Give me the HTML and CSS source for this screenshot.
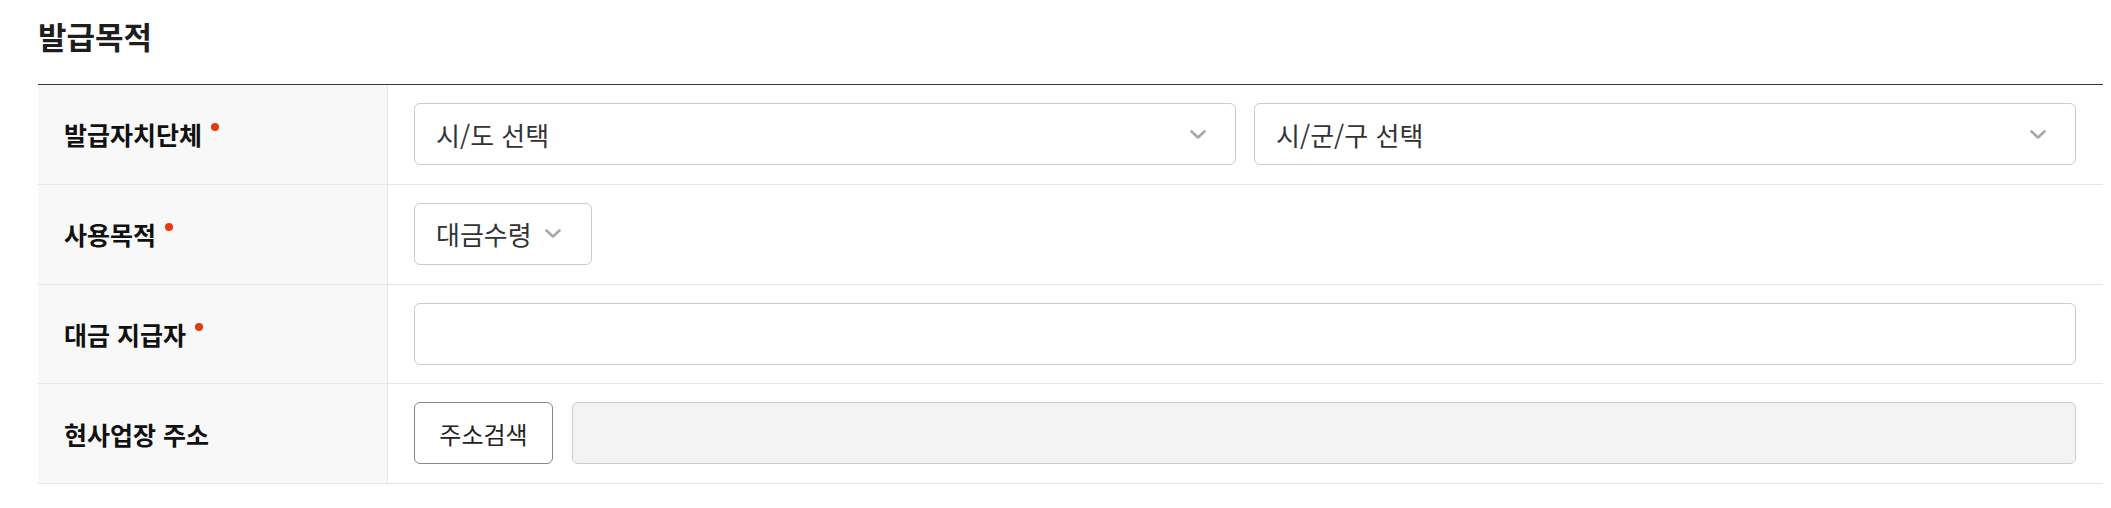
FILE: index.html
```html
<!DOCTYPE html>
<html lang="ko">
<head>
<meta charset="utf-8">
<title>발급목적</title>
<link rel="stylesheet" href="styles.css">
</head>
<body>
<section class="section">
  <h2 class="title">발급목적</h2>
  <div class="form-table">
    <div class="row">
      <div class="th">발급자치단체<span class="req"></span></div>
      <div class="td">
        <div class="select grow"><span>시/도 선택</span><svg class="chev" width="16" height="9" viewBox="0 0 16 9"><polyline points="1.5,1.5 8,7.5 14.5,1.5"/></svg></div>
        <div class="select grow"><span>시/군/구 선택</span><svg class="chev" width="16" height="9" viewBox="0 0 16 9"><polyline points="1.5,1.5 8,7.5 14.5,1.5"/></svg></div>
      </div>
    </div>
    <div class="row">
      <div class="th">사용목적<span class="req"></span></div>
      <div class="td">
        <div class="select compact"><span>대금수령</span><svg class="chev" width="16" height="9" viewBox="0 0 16 9"><polyline points="1.5,1.5 8,7.5 14.5,1.5"/></svg></div>
      </div>
    </div>
    <div class="row">
      <div class="th">대금 지급자<span class="req"></span></div>
      <div class="td">
        <div class="input"></div>
      </div>
    </div>
    <div class="row">
      <div class="th">현사업장 주소</div>
      <div class="td wide-gap">
        <button class="btn" type="button">주소검색</button>
        <div class="input disabled"></div>
      </div>
    </div>
  </div>
</section>
</body>
</html>
```
FILE: styles.css
```css
body {
  margin: 0;
  background: #fff;
  font-family: "Noto Sans CJK KR", "Noto Sans", sans-serif;
  color: #222;
}

.section {
  padding: 0 8px 0 38px;
}

.title {
  margin: 0 0 27px;
  padding-top: 15px;
  font-size: 31px;
  font-weight: 700;
  line-height: 42px;
  color: #1e1e1e;
}

.form-table {
  border-top: 1px solid #34344a;
}

.row {
  display: flex;
  border-bottom: 1px solid #e6e6e6;
}

.th {
  box-sizing: border-box;
  width: 350px;
  flex: none;
  display: flex;
  align-items: center;
  padding-left: 26px;
  background: #f8f8f8;
  border-right: 1px solid #e6e6e6;
  font-size: 25px;
  font-weight: 700;
  line-height: 34px;
  color: #111;
}

.req {
  align-self: center;
  width: 8px;
  height: 8px;
  margin: -14px 0 0 9px;
  border-radius: 50%;
  background: #e8380d;
}

.td {
  flex: 1;
  min-width: 0;
  display: flex;
  align-items: center;
  gap: 18px;
  padding: 18px 27px 18.75px 26px;
}

.td.wide-gap {
  gap: 19px;
}

.select {
  box-sizing: border-box;
  height: 62px;
  display: flex;
  align-items: center;
  justify-content: space-between;
  padding: 0 29px 0 21px;
  border: 1px solid #cccccc;
  border-radius: 6px;
  background: #fff;
  font-size: 26px;
  color: #333;
}

.select.grow {
  flex: 1;
}

.select.compact {
  gap: 13px;
  padding-right: 30px;
}

.chev {
  flex: none;
}

.chev polyline {
  fill: none;
  stroke: #a8a8a8;
  stroke-width: 2.6;
  stroke-linecap: round;
  stroke-linejoin: round;
}

.input {
  box-sizing: border-box;
  flex: 1;
  height: 62px;
  border: 1px solid #cccccc;
  border-radius: 6px;
  background: #fff;
}

.input.disabled {
  background: #f3f3f3;
}

.btn {
  box-sizing: border-box;
  flex: none;
  width: 139px;
  height: 62px;
  padding: 0;
  border: 1px solid #888;
  border-radius: 6px;
  background: #fff;
  font-family: inherit;
  font-size: 24px;
  color: #222;
  cursor: pointer;
}
```
